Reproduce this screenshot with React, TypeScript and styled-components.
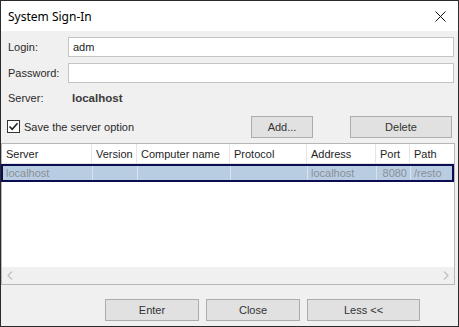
import styled, { createGlobalStyle } from "styled-components";

const GlobalStyle = createGlobalStyle`
    html, body {
        margin: 0;
        padding: 0;
        background: #ffffff;
    }
    * {
        box-sizing: border-box;
    }
`;

const StyledWindow = styled.div`
    width: 459px;
    height: 327px;
    border: 1px solid #2b2b2b;
    background: #f0f0f0;
    display: flex;
    flex-direction: column;
    font-family: "Liberation Sans", Arial, sans-serif;
    font-size: 11px;
    color: #1e1e1e;
    overflow: hidden;
`;

const StyledTitleBar = styled.div`
    height: 30px;
    background: #ffffff;
    display: flex;
    align-items: center;
    justify-content: space-between;
    padding: 0 8px 0 7px;
    font-family: "Noto Sans", "Open Sans", sans-serif;
    font-size: 12px;
    color: #000000;
`;

const StyledCloseBtn = styled.div`
    width: 20px;
    height: 20px;
    display: flex;
    align-items: center;
    justify-content: center;
`;

const StyledBody = styled.div`
    flex: 1;
    display: flex;
    flex-direction: column;
    padding-top: 6px;
`;

const StyledFieldRow = styled.div`
    display: flex;
    align-items: center;
    height: 20px;
    margin: 0 4px 6px 7px;
`;

const StyledLabel = styled.span`
    width: 60px;
    color: #2a2a2a;
`;

const StyledInput = styled.div`
    flex: 1;
    height: 20px;
    background: #ffffff;
    border: 1px solid #c4c4c4;
    padding: 0 4px;
    display: flex;
    align-items: center;
    color: #1a1a1a;
`;

const StyledServerRow = styled.div`
    display: flex;
    align-items: center;
    height: 16px;
    margin: 1px 4px 0 7px;
`;

const StyledServerName = styled.span`
    margin-left: 4px;
    font-weight: bold;
    color: #3a3a3a;
    font-size: 11.5px;
`;

const StyledOptionRow = styled.div`
    display: flex;
    align-items: center;
    height: 19px;
    margin: 11px 6px 7px 6px;
`;

const StyledCheckLabel = styled.label`
    flex: 1;
    display: flex;
    align-items: center;
    gap: 4px;
    color: #2a2a2a;
`;

const StyledCheckBox = styled.span`
    width: 13px;
    height: 13px;
    border: 1px solid #333333;
    background: #ffffff;
    display: flex;
    align-items: center;
    justify-content: center;
`;

const StyledButton = styled.div<{ $w: number; $ml?: number }>`
    width: ${(p) => p.$w}px;
    height: 22px;
    margin-left: ${(p) => p.$ml ?? 0}px;
    background: #e1e1e1;
    border: 1px solid #adadad;
    display: flex;
    align-items: center;
    justify-content: center;
    color: #333333;
`;

const StyledTable = styled.div`
    margin: 0 3px 0 0;
    height: 142px;
    background: #ffffff;
    border: 1px solid #b7b7b7;
    display: flex;
    flex-direction: column;
`;

const COLS = "90px 45px 93px 77px 69px 34px 1fr";

const StyledHeaderRow = styled.div`
    display: grid;
    grid-template-columns: ${COLS};
    height: 20px;
    border-bottom: 1px solid #e5e5e5;
`;

const StyledHeadCell = styled.div`
    border-right: 1px solid #e5e5e5;
    padding-left: 4px;
    display: flex;
    align-items: center;
    color: #1e1e1e;
    &:last-child {
        border-right: none;
    }
`;

const StyledDataRow = styled.div`
    display: grid;
    grid-template-columns: ${COLS};
    height: 18px;
    background: #b9cde2;
    border: 2px solid #0c0c52;
    margin-left: -1px;
`;

const StyledCell = styled.div<{ $right?: boolean }>`
    border-right: 1px solid #d7e2ee;
    padding: 0 3px 0 3px;
    display: flex;
    align-items: center;
    justify-content: ${(p) => (p.$right ? "flex-end" : "flex-start")};
    color: #8a8f96;
    &:last-child {
        border-right: none;
    }
`;

const StyledEmpty = styled.div`
    flex: 1;
`;

const StyledScrollBar = styled.div`
    height: 17px;
    background: #f0f0f0;
    display: flex;
    align-items: center;
    justify-content: space-between;
    padding: 0 5px;
`;

const StyledFooter = styled.div`
    display: flex;
    gap: 7px;
    padding-left: 104px;
    margin-top: 14px;
`;

const Chevron = ({ dir }: { dir: "l" | "r" }) => (
    <svg width="6" height="9" viewBox="0 0 6 9">
        <path
            d={dir === "l" ? "M5 0.5 L1 4.5 L5 8.5" : "M1 0.5 L5 4.5 L1 8.5"}
            stroke="#c2c2c2"
            strokeWidth="1.3"
            fill="none"
        />
    </svg>
);

export default function App() {
    return (
        <>
            <GlobalStyle />
            <StyledWindow>
                <StyledTitleBar>
                    <span>System Sign-In</span>
                    <StyledCloseBtn>
                        <svg width="11" height="11" viewBox="0 0 11 11">
                            <path d="M0.5 0.5 L10.5 10.5 M10.5 0.5 L0.5 10.5" stroke="#111" strokeWidth="1" />
                        </svg>
                    </StyledCloseBtn>
                </StyledTitleBar>

                <StyledBody>
                    <StyledFieldRow>
                        <StyledLabel>Login:</StyledLabel>
                        <StyledInput>adm</StyledInput>
                    </StyledFieldRow>
                    <StyledFieldRow>
                        <StyledLabel>Password:</StyledLabel>
                        <StyledInput />
                    </StyledFieldRow>
                    <StyledServerRow>
                        <StyledLabel>Server:</StyledLabel>
                        <StyledServerName>localhost</StyledServerName>
                    </StyledServerRow>

                    <StyledOptionRow>
                        <StyledCheckLabel>
                            <StyledCheckBox>
                                <svg width="11" height="11" viewBox="0 0 11 11">
                                    <path d="M1.5 5.5 L4.2 8.3 L9.5 2.2" stroke="#222" strokeWidth="1.6" fill="none" />
                                </svg>
                            </StyledCheckBox>
                            Save the server option
                        </StyledCheckLabel>
                        <StyledButton $w={62}>Add...</StyledButton>
                        <StyledButton $w={102} $ml={37}>Delete</StyledButton>
                    </StyledOptionRow>

                    <StyledTable>
                        <StyledHeaderRow>
                            <StyledHeadCell>Server</StyledHeadCell>
                            <StyledHeadCell>Version</StyledHeadCell>
                            <StyledHeadCell>Computer name</StyledHeadCell>
                            <StyledHeadCell>Protocol</StyledHeadCell>
                            <StyledHeadCell>Address</StyledHeadCell>
                            <StyledHeadCell>Port</StyledHeadCell>
                            <StyledHeadCell>Path</StyledHeadCell>
                        </StyledHeaderRow>
                        <StyledDataRow>
                            <StyledCell>localhost</StyledCell>
                            <StyledCell />
                            <StyledCell />
                            <StyledCell />
                            <StyledCell>localhost</StyledCell>
                            <StyledCell $right>8080</StyledCell>
                            <StyledCell>/resto</StyledCell>
                        </StyledDataRow>
                        <StyledEmpty />
                        <StyledScrollBar>
                            <Chevron dir="l" />
                            <Chevron dir="r" />
                        </StyledScrollBar>
                    </StyledTable>

                    <StyledFooter>
                        <StyledButton $w={94}>Enter</StyledButton>
                        <StyledButton $w={94}>Close</StyledButton>
                        <StyledButton $w={113}>Less &lt;&lt;</StyledButton>
                    </StyledFooter>
                </StyledBody>
            </StyledWindow>
        </>
    );
}
